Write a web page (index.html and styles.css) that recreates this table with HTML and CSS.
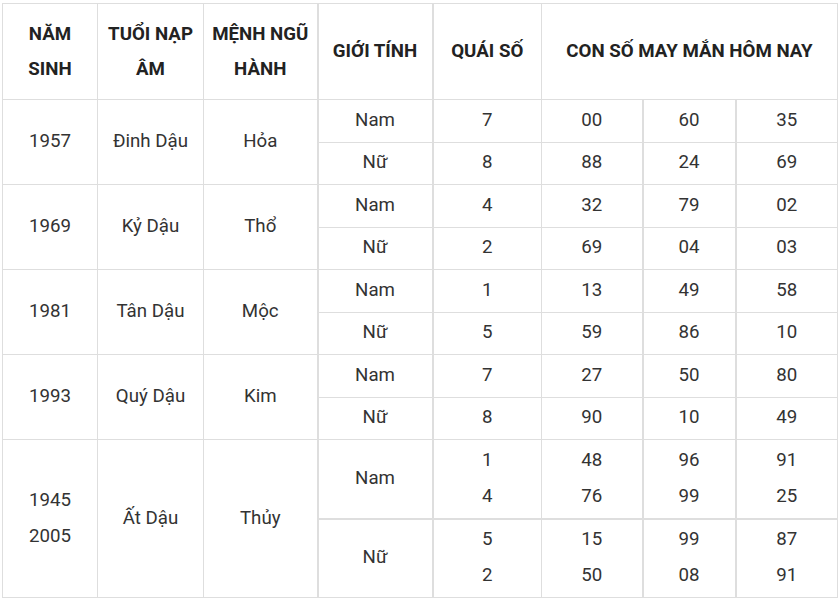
FILE: index.html
```html
<!DOCTYPE html>
<html lang="vi">
<head>
<meta charset="utf-8">
<title>Con số may mắn</title>
<link rel="stylesheet" href="styles.css">
</head>
<body>
<table class="lucky">
  <colgroup>
    <col class="c1"><col class="c2"><col class="c3"><col class="c4"><col class="c5"><col class="c6"><col class="c7"><col class="c8">
  </colgroup>
  <thead>
    <tr class="head">
      <th>NĂM<br>SINH</th>
      <th>TUỔI NẠP<br>ÂM</th>
      <th>MỆNH NGŨ<br>HÀNH</th>
      <th class="thick">GIỚI TÍNH</th>
      <th class="thick">QUÁI SỐ</th>
      <th colspan="3">CON SỐ MAY MẮN HÔM NAY</th>
    </tr>
  </thead>
  <tbody>
    <tr class="r"><td rowspan="2">1957</td><td rowspan="2">Đinh Dậu</td><td rowspan="2">Hỏa</td><td class="thick">Nam</td><td class="thick">7</td><td>00</td><td class="thick">60</td><td class="thick">35</td></tr>
    <tr class="r"><td class="thick">Nữ</td><td class="thick">8</td><td>88</td><td class="thick">24</td><td class="thick">69</td></tr>
    <tr class="r"><td rowspan="2">1969</td><td rowspan="2">Kỷ Dậu</td><td rowspan="2">Thổ</td><td class="thick">Nam</td><td class="thick">4</td><td>32</td><td class="thick">79</td><td class="thick">02</td></tr>
    <tr class="r"><td class="thick">Nữ</td><td class="thick">2</td><td>69</td><td class="thick">04</td><td class="thick">03</td></tr>
    <tr class="r"><td rowspan="2">1981</td><td rowspan="2">Tân Dậu</td><td rowspan="2">Mộc</td><td class="thick">Nam</td><td class="thick">1</td><td>13</td><td class="thick">49</td><td class="thick">58</td></tr>
    <tr class="r"><td class="thick">Nữ</td><td class="thick">5</td><td>59</td><td class="thick">86</td><td class="thick">10</td></tr>
    <tr class="r"><td rowspan="2">1993</td><td rowspan="2">Quý Dậu</td><td rowspan="2">Kim</td><td class="thick">Nam</td><td class="thick">7</td><td>27</td><td class="thick">50</td><td class="thick">80</td></tr>
    <tr class="r"><td class="thick">Nữ</td><td class="thick">8</td><td>90</td><td class="thick">10</td><td class="thick">49</td></tr>
    <tr class="r2"><td rowspan="2">1945<br>2005</td><td rowspan="2">Ất Dậu</td><td rowspan="2">Thủy</td><td class="thick">Nam</td><td class="thick">1<br>4</td><td>48<br>76</td><td class="thick">96<br>99</td><td class="thick">91<br>25</td></tr>
    <tr class="r2 split"><td class="thick">Nữ</td><td class="thick">5<br>2</td><td>15<br>50</td><td class="thick">99<br>08</td><td class="thick">87<br>91</td></tr>
  </tbody>
</table>
</body>
</html>
```
FILE: styles.css
```css
html, body {
  margin: 0;
  padding: 0;
  background: #fff;
}
body {
  padding: 3px 0 0 2px;
  font-family: Roboto, "Liberation Sans", Arial, sans-serif;
}
.lucky {
  border-collapse: collapse;
  table-layout: fixed;
  width: 835px;
  font-size: 18.7px;
  color: #333;
}
.c1 { width: 95px; }
.c2 { width: 106px; }
.c3 { width: 114px; }
.c4 { width: 115px; }
.c5 { width: 109px; }
.c6 { width: 101px; }
.c7 { width: 93px; }
.c8 { width: 102px; }
.lucky th,
.lucky td {
  border: 1px solid #dedede;
  text-align: center;
  vertical-align: middle;
  padding: 0;
}
.lucky th {
  font-weight: 700;
  color: #222;
  line-height: 35px;
  padding-bottom: 0;
}
.lucky td {
  line-height: 36px;
  padding-bottom: 2px;
}
.lucky .thick {
  border-left: 2px solid #dedede;
}
.head { height: 96px; }
.r { height: 42.5px; }
.r2 { height: 79px; }
.split td.thick,
.split td.thick ~ td {
  border-top: 2px solid #dedede;
}
```
